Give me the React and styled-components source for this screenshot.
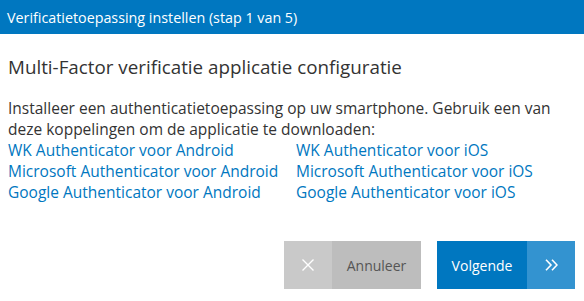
import React from "react";
import styled, { createGlobalStyle } from "styled-components";

const Global = createGlobalStyle`
  html, body { margin: 0; padding: 0; background: #fff; }
  body { font-family: "Open Sans", "Noto Sans", sans-serif; }
`;

const Dialog = styled.div`
  width: 584px;
  height: 301px;
  display: flex;
  flex-direction: column;
  background: #fff;
`;

const Header = styled.div`
  height: 34px;
  background: #0077c0;
  color: #fff;
  font-size: 14.3px;
  display: flex;
  align-items: center;
  padding: 0 7px;
`;

const Body = styled.div`
  padding: 20px 8px 0 8px;
  flex: 1;
  display: flex;
  flex-direction: column;
`;

const Title = styled.h2`
  margin: 0 0 17px 0;
  font-weight: 400;
  font-size: 18.8px;
  line-height: 27px;
  color: #333;
`;

const Text = styled.p`
  margin: 0;
  font-size: 15.5px;
  line-height: 21px;
  color: #333;
`;

const Links = styled.div`
  display: grid;
  grid-template-columns: 288px 1fr;
  font-size: 15.5px;
  line-height: 21px;
`;

const Link = styled.a`
  color: #0077c0;
  text-decoration: none;
`;

const Footer = styled.div`
  display: flex;
  justify-content: flex-end;
  gap: 16px;
  padding: 0 1px 12px 0;
  margin-top: auto;
`;

const Button = styled.button`
  display: flex;
  height: 48px;
  padding: 0;
  border: 0;
  font-family: inherit;
  font-size: 14px;
  cursor: pointer;
  background: none;
`;

const Cell = styled.span`
  display: flex;
  align-items: center;
  justify-content: center;
  width: ${(p) => p.$w}px;
  background: ${(p) => p.$bg};
  color: ${(p) => p.$fg};
`;

export default function App() {
  return (
    <Dialog>
      <Global />
      <Header>Verificatietoepassing instellen (stap 1 van 5)</Header>
      <Body>
        <Title>Multi-Factor verificatie applicatie configuratie</Title>
        <Text>
          Installeer een authenticatietoepassing op uw smartphone. Gebruik een van
          deze koppelingen om de applicatie te downloaden:
        </Text>
        <Links>
          <Link href="#">WK Authenticator voor Android</Link>
          <Link href="#">WK Authenticator voor iOS</Link>
          <Link href="#">Microsoft Authenticator voor Android</Link>
          <Link href="#">Microsoft Authenticator voor iOS</Link>
          <Link href="#">Google Authenticator voor Android</Link>
          <Link href="#">Google Authenticator voor iOS</Link>
        </Links>
        <Footer>
          <Button>
            <Cell $w={48} $bg="#c9c9c9" $fg="#fff">
              <svg width="12" height="12" viewBox="0 0 12 12">
                <path d="M0.5 0.5 L11.5 11.5 M11.5 0.5 L0.5 11.5" stroke="#fff" strokeWidth="1.4" />
              </svg>
            </Cell>
            <Cell $w={89} $bg="#bdbdbd" $fg="#555">Annuleer</Cell>
          </Button>
          <Button>
            <Cell $w={90} $bg="#0077c0" $fg="#fff">Volgende</Cell>
            <Cell $w={48} $bg="#3393d0" $fg="#fff">
              <svg width="13" height="12" viewBox="0 0 13 12">
                <path d="M1 0.8 L6 6 L1 11.2 M7 0.8 L12 6 L7 11.2" stroke="#fff" strokeWidth="1.6" fill="none" />
              </svg>
            </Cell>
          </Button>
        </Footer>
      </Body>
    </Dialog>
  );
}
